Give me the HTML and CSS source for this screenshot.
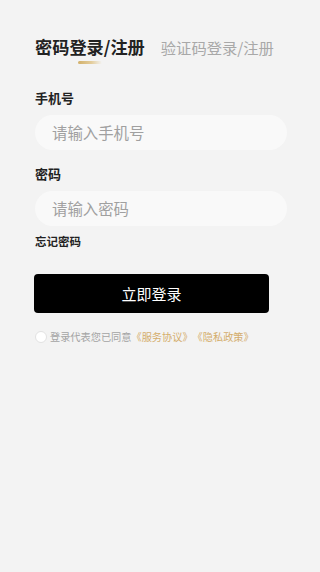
FILE: index.html
```html
<!DOCTYPE html>
<html lang="zh">
<head>
<meta charset="utf-8">
<link rel="stylesheet" href="styles.css">
</head>
<body>
<div class="page">
  <div class="tabs">
    <div class="tab active">密码登录/注册<span class="bar"></span></div>
    <div class="tab">验证码登录/注册</div>
  </div>
  <div class="field">
    <div class="label">手机号</div>
    <div class="input">请输入手机号</div>
  </div>
  <div class="field">
    <div class="label">密码</div>
    <div class="input">请输入密码</div>
  </div>
  <div class="forgot">忘记密码</div>
  <div class="btn">立即登录</div>
  <div class="agree">
    <span class="check"></span>
    <span>登录代表您已同意</span><span class="link">《服务协议》《隐私政策》</span>
  </div>
</div>
</body>
</html>
```
FILE: styles.css
```css
* { box-sizing: border-box; }
html, body { margin: 0; padding: 0; }
body {
  background: #f3f3f3;
  font-family: "Noto Sans CJK SC", "Noto Sans", sans-serif;
  text-spacing-trim: space-all;
  width: 320px;
  height: 572px;
  overflow: hidden;
}
.page {
  padding: 35px 33px 0 35px;
  display: flex;
  flex-direction: column;
}
.tabs {
  display: flex;
  align-items: baseline;
  gap: 16px;
  height: 38px;
}
.tab {
  font-size: 15.3px;
  color: #a8a8a8;
  line-height: 24px;
  position: relative;
}
.tab.active {
  font-size: 17.2px;
  font-weight: 700;
  color: #222;
}
.bar {
  position: absolute;
  left: 43px;
  top: 26px;
  width: 24px;
  height: 3px;
  border-radius: 2px;
  background: linear-gradient(90deg, #d2b06a 0%, #e3cc9a 55%, rgba(240,230,210,0) 100%);
}
.field {
  display: flex;
  flex-direction: column;
}
.label {
  font-size: 13px;
  font-weight: 700;
  color: #222;
  line-height: 20px;
  margin-top: 15px;
  margin-bottom: 7px;
}
.input {
  height: 35px;
  border-radius: 18px;
  background: #f9f9f9;
  font-size: 15.4px;
  color: #a0a0a0;
  line-height: 35px;
  padding-left: 17px;
}
.field + .field .label { margin-top: 14px; margin-bottom: 7px; }
.forgot {
  font-size: 11.5px;
  font-weight: 700;
  color: #222;
  margin-top: 6px;
  line-height: 18px;
}
.btn {
  margin-top: 24px;
  width: 235px;
  height: 39px;
  border-radius: 4px;
  background: #000;
  color: #fff;
  font-size: 15px;
  display: flex;
  align-items: center;
  justify-content: center;
  margin-left: -1px;
}
.agree {
  margin-top: 16px;
  display: flex;
  align-items: center;
  font-size: 10.2px;
  color: #a4a4a4;
  line-height: 16px;
}
.check {
  width: 12px;
  height: 12px;
  border-radius: 50%;
  background: #fff;
  border: 1px solid #e2e2e2;
  margin-right: 3px;
}
.link { color: #d3ad6c; }
```
